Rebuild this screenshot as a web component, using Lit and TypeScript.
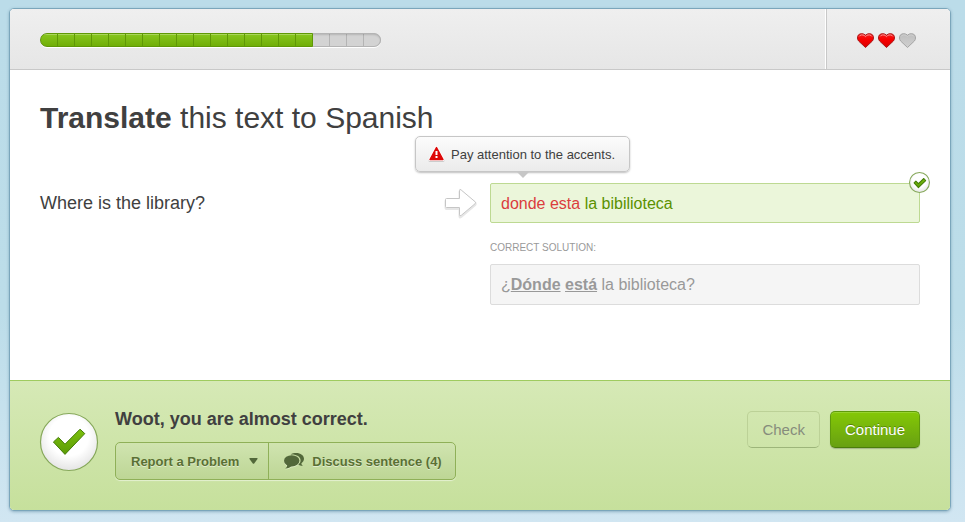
import { LitElement, html, css, svg } from "lit";
import { customElement, property, state } from "lit/decorators.js";

const TOTAL_STEPS = 20;
const STEP_WIDTH = 17;

@customElement("lesson-progress")
class LessonProgress extends LitElement {
  @property({ type: Number }) value = 0;

  static styles = css`
    .track {
      position: relative;
      height: 14px;
      border-radius: 7px;
      overflow: hidden;
      background: repeating-linear-gradient(90deg, #b4b4b4 0 1px, #d3d3d3 1px 17px);
    }
    .wrap {
      border-radius: 7px;
      box-shadow: 0 1px 0 #fff;
    }
    .track::after {
      content: "";
      position: absolute;
      inset: 0;
      border-radius: 7px;
      box-shadow: inset 0 0 0 1px #b4b4b4, inset 0 2px 2px rgba(0, 0, 0, 0.14);
    }
    .fill {
      position: relative;
      z-index: 1;
      box-sizing: border-box;
      height: 14px;
      border: 1px solid #5f9806;
      border-radius: 7px 0 0 7px;
      background:
        repeating-linear-gradient(90deg, transparent 0 16px, #5f9806 16px 17px),
        linear-gradient(#a9d65b 0 1px, #85c41c 1px, #70ae08);
    }
  `;

  render() {
    return html`<div class="wrap">
      <div
        class="track"
        role="progressbar"
        aria-label="Lesson progress"
        aria-valuemin="0"
        aria-valuemax=${TOTAL_STEPS}
        aria-valuenow=${this.value}
      >
        <div class="fill" style="width:${this.value * STEP_WIDTH + 1}px"></div>
      </div>
    </div>`;
  }
}

const heartPath =
  "M8.5 14.5 L1.6 8 C0.2 6.4 0.2 3.6 1.3 2.1 C2.9 0.2 6.6 0.2 8.5 2.2 C10.4 0.2 14.1 0.2 15.7 2.1 C16.8 3.6 16.8 6.4 15.4 8 Z";
const shinePath = "M2.2 3.4 C2.9 1.7 6 1.5 7.4 2.6 L8.5 3.6 L9.6 2.6 C11 1.5 14.1 1.7 14.8 3.4";

@customElement("lesson-hearts")
class LessonHearts extends LitElement {
  @property({ type: Number }) left = 0;

  static styles = css`
    .hearts {
      display: flex;
      gap: 4px;
    }
    svg {
      display: block;
    }
  `;

  render() {
    return html`<div class="hearts" role="img" aria-label="${this.left} of 3 hearts left">
      ${[0, 1, 2].map((i) => {
        const full = i < this.left;
        return html`<svg width="17" height="16" viewBox="0 0 17 16">
          <defs>
            <linearGradient id="heart-${i}" x1="0" y1="0" x2="0" y2="1">
              <stop offset="0" stop-color=${full ? "#f02020" : "#bdbdbd"} />
              <stop offset="0.4" stop-color=${full ? "#fa0000" : "#c6c6c6"} />
              <stop offset="1" stop-color=${full ? "#d80000" : "#cfcfcf"} />
            </linearGradient>
          </defs>
          <path d=${heartPath} fill="url(#heart-${i})" stroke=${full ? "#a81818" : "#a4a4a4"} />
          ${full
            ? svg`<path d=${shinePath} fill="none" stroke="#ffb0b0" stroke-width="0.8" />`
            : svg`<path d=${shinePath} fill="none" stroke="#d2d2d2" stroke-width="0.8" />`}
        </svg>`;
      })}
    </div>`;
  }
}

@customElement("check-badge")
class CheckBadge extends LitElement {
  static styles = css`
    :host {
      display: block;
    }
    svg {
      display: block;
      width: 100%;
      height: 100%;
      overflow: visible;
    }
  `;

  @property({ type: Boolean }) small = false;

  render() {
    const tick = this.small
      ? "M14 30 L19 25 L26 32 L41 18 L46 24 L26 43 Z"
      : "M13.4 29 L18.4 24.4 L25 31.2 L40 16.2 L44.8 20.6 L25 41.4 Z";
    return html`<svg viewBox="0 0 58 58" role="img" aria-label="Correct">
      <defs>
        <radialGradient id="disc" cx="0.5" cy="0.4" r="0.62">
          <stop offset="0.55" stop-color="#fff" />
          <stop offset="1" stop-color="#e2e2e2" />
        </radialGradient>
        <linearGradient id="tick" x1="0" y1="0" x2="0" y2="1">
          <stop offset="0" stop-color="#7cc00c" />
          <stop offset="1" stop-color="#5c9c06" />
        </linearGradient>
      </defs>
      <circle
        cx="29" cy="29"
        r=${this.small ? 27.5 : 28.5}
        fill="url(#disc)" stroke="#86a85a"
        stroke-width=${this.small ? 3 : 1.2}
      />
      <path d=${tick} fill="url(#tick)" stroke="#447d08" stroke-width=${this.small ? 3 : 1} stroke-linejoin="round" />
    </svg>`;
  }
}

@customElement("app-root")
class AppRoot extends LitElement {
  @state() private steps = 16;
  @state() private hearts = 2;

  static styles = css`
    :host {
      display: block;
      box-sizing: border-box;
      min-height: 100vh;
      padding: 8px 14px 11px 9px;
      background: linear-gradient(#bbdce9, #bcdde9 60%, #d1e6f2);
      font-family: "Liberation Sans", Arial, sans-serif;
      color: #404040;
    }
    * {
      box-sizing: border-box;
    }
    svg {
      display: block;
      overflow: visible;
      flex: none;
    }
    .card {
      border: 1px solid #7ba6bb;
      border-radius: 5px;
      background: #fff;
      box-shadow: 0 1px 3px rgba(60, 110, 140, 0.45);
      overflow: hidden;
    }
    .top {
      display: flex;
      height: 61px;
      border-bottom: 1px solid #c8c8c8;
      background: linear-gradient(#efefef, #e6e6e6);
    }
    .progress {
      flex: 1;
      padding: 24px 30px;
      border-right: 1px solid #fff;
    }
    lesson-progress {
      display: block;
      max-width: 341px;
    }
    .lives {
      display: flex;
      justify-content: flex-end;
      width: 124px;
      padding: 24px 34px 0 0;
      border-left: 1px solid #c8c8c8;
    }
    .work {
      padding: 30px 30px 75px;
    }
    h1 {
      margin: 0 0 47px;
      font-size: 30px;
      line-height: 36px;
      font-weight: 400;
    }
    .exercise {
      display: grid;
      grid-template-columns: 1fr 33px calc(50% - 10px);
      column-gap: 12px;
      align-items: start;
    }
    .source {
      margin: 0;
      font-size: 18px;
      line-height: 40px;
    }
    .arrow {
      margin-top: 5px;
    }
    .answer-wrap {
      position: relative;
    }
    .field {
      padding: 0 10px;
      border: 1px solid #dcdcdc;
      border-radius: 2px;
      background: #f5f5f5;
      color: #999;
      font-size: 16px;
      line-height: 39px;
    }
    .answer {
      padding-top: 2px;
      border-color: #bdd992;
      background: #ebf6da;
      color: #5b9100;
      line-height: 36px;
    }
    .wrong {
      color: #db3d3d;
    }
    .badge {
      position: absolute;
      top: -11px;
      right: -10px;
      width: 21px;
      height: 21px;
    }
    .tip {
      position: absolute;
      left: -75px;
      bottom: 51px;
      display: flex;
      align-items: center;
      gap: 7px;
      height: 36px;
      padding: 0 14px 0 13px;
      border: 1px solid #c6c6c6;
      border-radius: 5px;
      background: linear-gradient(#fcfcfc, #ebebeb);
      box-shadow: 0 1px 2px rgba(0, 0, 0, 0.25);
      font-size: 13px;
      white-space: nowrap;
    }
    .tip svg {
      margin-bottom: 2px;
    }
    .tip::after {
      content: "";
      position: absolute;
      left: 100px;
      top: 100%;
      border: 7px solid transparent;
      border-top-color: #c6c6c6;
      border-bottom: 0;
    }
    h2 {
      margin: 18px 0 9px;
      font-size: 10px;
      line-height: 14px;
      font-weight: 400;
      color: #999;
      text-transform: uppercase;
    }
    .result {
      display: flex;
      align-items: flex-start;
      min-height: 130px;
      padding: 30px;
      border-top: 1px solid #9fcb5f;
      background: linear-gradient(#d6e9b6, #c6e09c);
    }
    .big {
      width: 58px;
      height: 58px;
      margin: 2px 17px 0 0;
    }
    .verdict {
      flex: 1;
    }
    h3 {
      margin: 0 0 15px;
      font-size: 18px;
      line-height: 16px;
      font-weight: 700;
    }
    button {
      font-family: inherit;
      cursor: pointer;
    }
    .group {
      display: inline-flex;
      height: 38px;
      border: 1px solid #8fb058;
      border-radius: 5px;
      background: linear-gradient(#d0e4b0, #bdd695);
      box-shadow: 0 1px 1px rgba(255, 255, 255, 0.5);
    }
    .tool {
      display: flex;
      align-items: center;
      padding: 0 15px;
      border: 0;
      background: none;
      color: #5a7034;
      font-size: 13px;
      font-weight: 700;
      text-shadow: 0 1px 0 rgba(255, 255, 255, 0.5);
      white-space: nowrap;
    }
    .report {
      gap: 10px;
      padding-right: 10px;
      border-right: 1px solid #8fb058;
    }
    .discuss {
      gap: 8px;
      padding-right: 13px;
    }
    .actions {
      display: flex;
      gap: 10px;
    }
    .btn {
      height: 37px;
      padding: 0 14px;
      border-radius: 5px;
      font-size: 15px;
    }
    .check {
      border: 1px solid #bcd197;
      border-bottom-color: #9db57a;
      background: transparent;
      color: #868c7c;
    }
    .continue {
      border: 1px solid #5f9a0c;
      border-bottom-color: #4b7d0b;
      background: linear-gradient(#84c806, #68a012);
      box-shadow: inset 0 1px 0 #97d32d, 0 1px 1px rgba(0, 0, 0, 0.2);
      color: #fff;
      text-shadow: 0 -1px 0 rgba(0, 0, 0, 0.3);
    }
  `;

  render() {
    return html`<main class="card">
      <header class="top">
        <div class="progress"><lesson-progress .value=${this.steps}></lesson-progress></div>
        <div class="lives"><lesson-hearts .left=${this.hearts}></lesson-hearts></div>
      </header>

      <section class="work">
        <h1><b>Translate</b> this text to Spanish</h1>
        <div class="exercise">
          <p class="source">Where is the library?</p>
          <svg class="arrow" width="33" height="30" viewBox="0 0 33 30" aria-hidden="true">
            <path
              d="M1.5 11 H14.5 V3 Q14.5 1 16.2 2.4 L30.2 14 Q31.2 15 30.2 16 L16.2 28 Q14.5 29.2 14.5 27.4 V20 H1.5 Q0.5 20 0.5 19 V12 Q0.5 11 1.5 11 Z"
              fill="none" stroke="#e6e6e6" stroke-width="2" transform="translate(0 1)"
            />
            <path
              d="M1.5 10.5 H14.5 V2.5 Q14.5 0.6 16.2 2 L30.2 13.8 Q31 14.7 30.2 15.6 L16.2 27.4 Q14.5 28.6 14.5 26.8 V19.5 H1.5 Q0.5 19.5 0.5 18.5 V11.5 Q0.5 10.5 1.5 10.5 Z"
              fill="#fff" stroke="#c6c6c6"
            />
          </svg>
          <div>
            <div class="answer-wrap">
              <div class="field answer" role="textbox" aria-readonly="true" aria-label="Your answer">
                <span class="wrong">donde esta</span> la bibilioteca
              </div>
              <check-badge class="badge" small></check-badge>
              <div class="tip" role="tooltip">
                <svg width="15" height="15" viewBox="0 0 15 15" aria-hidden="true">
                  <path d="M7.5 1.5 L14 13.5 H1 Z" fill="none" stroke="#ccc" stroke-width="3" stroke-linejoin="round" transform="translate(0 1)" />
                  <path d="M7.5 1.5 L14 13.5 H1 Z" fill="#dd0808" stroke="#fff" stroke-width="3" stroke-linejoin="round" />
                  <path d="M7.5 1.5 L14 13.5 H1 Z" fill="#dd0808" stroke="#dd0808" stroke-width="1.4" stroke-linejoin="round" />
                  <path d="M6.5 5 H8.5 V9 H6.5 Z M6.5 10 H8.5 V12 H6.5 Z" fill="#fff" />
                </svg>
                <span>Pay attention to the accents.</span>
              </div>
            </div>
            <h2>Correct solution:</h2>
            <div class="field solution">¿<b><u>Dónde</u></b> <b><u>está</u></b> la biblioteca?</div>
          </div>
        </div>
      </section>

      <footer class="result">
        <check-badge class="big"></check-badge>
        <div class="verdict">
          <h3>Woot, you are almost correct.</h3>
          <div class="group">
            <button class="tool report" type="button">
              Report a Problem
              <svg width="9" height="6" viewBox="0 0 9 6" aria-hidden="true">
                <path d="M1 0 H8 Q9 0 8.5 1 L5.2 5.4 Q4.5 6 3.8 5.4 L0.5 1 Q0 0 1 0 Z" fill="#52683a" />
              </svg>
            </button>
            <button class="tool discuss" type="button">
              <svg width="20" height="16" viewBox="0 0 20 16" aria-hidden="true">
                <path
                  d="M6.6 1.6 C8 0.4 10 0 12.2 0 C16.6 0 20 2.6 20 5.8 C20 7.7 19 9.2 17.4 10.2 C17.5 11.6 18.2 12.4 19 13 C17 13 15.2 12.4 14 11.6 C15.6 10.6 16.6 9.2 16.6 7.4 C16.6 3.6 12.2 1.2 6.6 1.6 Z"
                  fill="#52683a"
                />
                <g fill="#dcecc2" transform="translate(0 1)">
                  <ellipse cx="7.7" cy="7.8" rx="7.7" ry="5.6" />
                  <path d="M3.4 11 Q3.6 14 1.2 15.6 Q5.6 15.6 8 12.6 Z" />
                </g>
                <ellipse cx="7.7" cy="7.8" rx="7.7" ry="5.6" fill="#52683a" />
                <path d="M3.4 11 Q3.6 14 1.2 15.6 Q5.6 15.6 8 12.6 Z" fill="#52683a" />
              </svg>
              Discuss sentence (4)
            </button>
          </div>
        </div>
        <div class="actions">
          <button class="btn check" type="button">Check</button>
          <button class="btn continue" type="button">Continue</button>
        </div>
      </footer>
    </main>`;
  }
}
